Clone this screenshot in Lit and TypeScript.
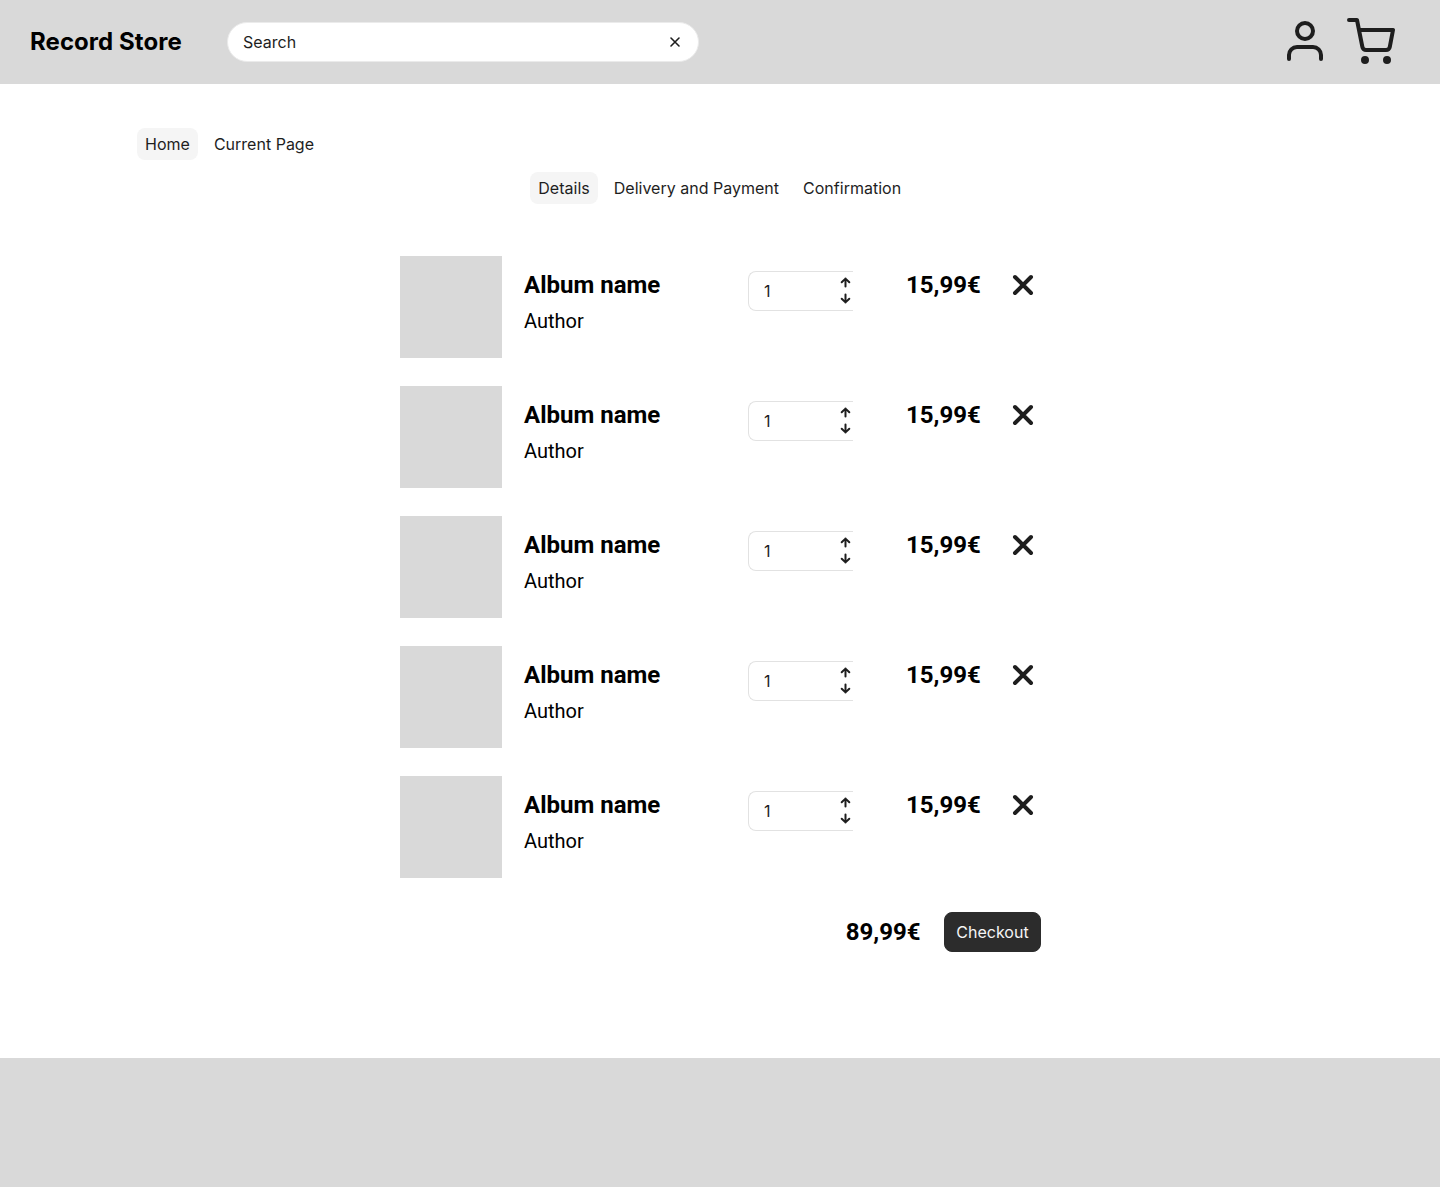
import { LitElement, html, css, svg } from "lit";
import { customElement, property } from "lit/decorators.js";

interface CartLine {
  album: string;
  author: string;
  quantity: number;
  price: string;
}

const lines: CartLine[] = Array.from({ length: 5 }, () => ({
  album: "Album name",
  author: "Author",
  quantity: 1,
  price: "15,99€",
}));

const icon = (size: number, width: number, body: unknown) => html`
  <svg
    width=${size}
    height=${size}
    viewBox="0 0 ${size} ${size}"
    fill="none"
    stroke="#1e1e1e"
    stroke-width=${width}
    stroke-linecap="round"
    stroke-linejoin="round"
    aria-hidden="true"
  >${body}</svg>
`;

const userIcon = icon(48, 4, svg`<path d="M40 42v-4a8 8 0 0 0-8-8H16a8 8 0 0 0-8 8v4" /><circle cx="24" cy="14" r="8" />`);
const cartIcon = icon(48, 4, svg`<circle cx="18" cy="42" r="2" /><circle cx="40" cy="42" r="2" /><path d="M2 2h8l5.36 26.78a4 4 0 0 0 4 3.22H38.8a4 4 0 0 0 4-3.22L46 12H12" />`);
const clearIcon = icon(16, 1.6, svg`<path d="M12 4 4 12M4 4l8 8" />`);
const removeIcon = icon(32, 4, svg`<path d="M24 8 8 24M8 8l16 16" />`);
const upIcon = icon(16, 2, svg`<path d="M8.5 11.4V3.6M4.7 7.3 8.5 3.6l3.8 3.7" />`);
const downIcon = icon(16, 2, svg`<path d="M8.5 3.6v7.8M4.7 7.7l3.8 3.7 3.8-3.7" />`);

const base = css`
  * {
    box-sizing: border-box;
  }
  svg {
    display: block;
    flex: none;
  }
  button {
    border: 0;
    padding: 0;
    margin: 0;
    background: none;
    font: inherit;
    color: inherit;
  }
`;

@customElement("store-header")
export class StoreHeader extends LitElement {
  static styles = [
    base,
    css`
      :host {
        display: flex;
        align-items: center;
        height: 84px;
        padding: 0 45px 0 30px;
        background: #d9d9d9;
      }
      .brand {
        width: 197px;
        padding-bottom: 2px;
        font-size: 24px;
        font-weight: 700;
        line-height: 29px;
        letter-spacing: 0.06px;
        color: #000;
        white-space: nowrap;
      }
      .search {
        display: flex;
        align-items: center;
        justify-content: space-between;
        width: 472px;
        height: 40px;
        padding: 0 15px;
        border: 1px solid #ebebeb;
        border-radius: 20px;
        background: #fff;
      }
      .actions {
        display: flex;
        align-items: flex-start;
        gap: 18px;
        margin-left: auto;
        padding-bottom: 1px;
      }
      .basket {
        padding-top: 1px;
      }
    `,
  ];

  render() {
    return html`
      <div class="brand">Record Store</div>
      <div class="search"><span>Search</span><button>${clearIcon}</button></div>
      <div class="actions">
        <button class="account">${userIcon}</button>
        <button class="basket">${cartIcon}</button>
      </div>
    `;
  }
}

@customElement("pill-nav")
export class PillNav extends LitElement {
  static styles = [
    base,
    css`
      :host {
        display: flex;
        gap: 8px;
      }
      .pill {
        height: 32px;
        padding: 8px;
        border-radius: 8px;
        line-height: 16px;
        letter-spacing: 0.01px;
        white-space: nowrap;
      }
      .active {
        background: #f5f5f5;
      }
    `,
  ];

  @property({ attribute: false }) items: string[] = [];

  render() {
    return this.items.map(
      (item, i) => html`<span class="pill ${i === 0 ? "active" : ""}">${item}</span>`
    );
  }
}

@customElement("cart-line")
export class CartLineRow extends LitElement {
  static styles = [
    base,
    css`
      :host {
        display: grid;
        grid-template-columns: 102px 224px 105px 53px 100px 1fr;
        height: 102px;
      }
      .cover {
        background: #d9d9d9;
      }
      .about {
        padding: 15px 0 0 22px;
        font-family: Roboto, sans-serif;
        color: #000;
      }
      .album {
        font-size: 24px;
        font-weight: 700;
        line-height: 28px;
      }
      .author {
        margin-top: 10px;
        font-size: 20px;
        line-height: 24px;
      }
      .quantity {
        display: flex;
        justify-content: space-between;
        grid-column: 3;
        width: 105px;
        height: 40px;
        margin: 15px 0 0 22px;
        padding: 0 0 0 15px;
        border: 1px solid #e2e2e2;
        border-right: 0;
        border-radius: 8px 0 0 8px;
        line-height: 38px;
      }
      .steps {
        display: flex;
        flex-direction: column;
        padding-top: 3px;
      }
      .price {
        grid-column: 5;
        padding: 15px 0 0 22px;
        font: 700 24px/28px Roboto, sans-serif;
        color: #000;
      }
      .remove {
        margin: 13px 0 0 23px;
        align-self: start;
        justify-self: start;
      }
    `,
  ];

  @property({ attribute: false }) line!: CartLine;

  render() {
    const { album, author, quantity, price } = this.line;
    return html`
      <div class="cover"></div>
      <div class="about">
        <div class="album">${album}</div>
        <div class="author">${author}</div>
      </div>
      <div class="quantity">
        <span>${quantity}</span>
        <div class="steps">
          <button>${upIcon}</button>
          <button>${downIcon}</button>
        </div>
      </div>
      <div class="price">${price}</div>
      <button class="remove">${removeIcon}</button>
    `;
  }
}

@customElement("app-root")
export class AppRoot extends LitElement {
  static styles = [
    base,
    css`
      :host {
        display: flex;
        flex-direction: column;
        width: 1440px;
        height: 1187px;
        background: #fff;
        color: #1e1e1e;
        font: 400 16px/16px Inter, sans-serif;
      }
      .crumbs {
        margin: 44px 0 0 137px;
      }
      .stages {
        margin: 12px 0 0 530.3px;
      }
      .list {
        display: flex;
        flex-direction: column;
        gap: 28px;
        width: 641px;
        margin: 52px 0 0 400px;
      }
      .summary {
        display: flex;
        align-items: center;
        justify-content: flex-end;
        gap: 23.5px;
        width: 641px;
        margin: 34px 0 0 400px;
      }
      .total {
        font: 700 24px/28px Roboto, sans-serif;
        color: #000;
      }
      .checkout {
        width: 97px;
        height: 40px;
        border: 1px solid #2c2c2c;
        border-radius: 8px;
        background: #2c2c2c;
        color: #f5f5f5;
      }
      .footer {
        height: 129px;
        margin-top: auto;
        background: #d9d9d9;
      }
    `,
  ];

  render() {
    return html`
      <store-header></store-header>
      <pill-nav class="crumbs" .items=${["Home", "Current Page"]}></pill-nav>
      <pill-nav class="stages" .items=${["Details", "Delivery and Payment", "Confirmation"]}></pill-nav>
      <div class="list">${lines.map((line) => html`<cart-line .line=${line}></cart-line>`)}</div>
      <div class="summary">
        <span class="total">89,99€</span>
        <button class="checkout">Checkout</button>
      </div>
      <div class="footer"></div>
    `;
  }
}
